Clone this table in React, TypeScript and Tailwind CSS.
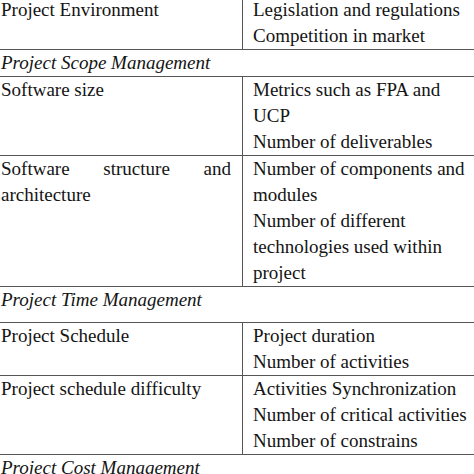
type Row =
  | { kind: "section"; title: string; extra?: boolean }
  | { kind: "pair"; left: string; right: string[]; justify?: boolean };

const rows: Row[] = [
  { kind: "pair", left: "Project Environment", right: ["Legislation and regulations", "Competition in market"] },
  { kind: "section", title: "Project Scope Management" },
  { kind: "pair", left: "Software size", right: ["Metrics such as FPA and", "UCP", "Number of deliverables"] },
  {
    kind: "pair",
    left: "Software structure and architecture",
    justify: true,
    right: ["Number of components and", "modules", "Number of different", "technologies used within", "project"],
  },
  { kind: "section", title: "Project Time Management", extra: true },
  { kind: "pair", left: "Project Schedule", right: ["Project duration", "Number of activities"] },
  {
    kind: "pair",
    left: "Project schedule difficulty",
    right: ["Activities Synchronization", "Number of critical activities", "Number of constrains"],
  },
  { kind: "section", title: "Project Cost Management" },
];

export default function App() {
  return (
    <div
      className="h-[474px] w-[474px] overflow-hidden bg-white text-[19px] leading-[26px] text-[#141414]"
      style={{ fontFamily: '"Liberation Serif", "Times New Roman", serif' }}
    >
      <div className="-mt-[3px]">
        {rows.map((row, i) =>
          row.kind === "section" ? (
            <div
              key={i}
              className={[
                "border-b border-[#555] pl-[1px] italic",
                row.extra ? "pb-[9px]" : "",
              ].join(" ")}
            >
              {row.title}
            </div>
          ) : (
            <div key={i} className="flex border-b border-[#555]">
              <div className="w-[243px] shrink-0 border-r border-[#555] pl-[1px] pr-[11px]">
                {row.justify ? <p className="text-justify">{row.left}</p> : row.left}
              </div>
              <div className="flex-1 pl-[10px]">
                {row.right.map((line) => (
                  <div key={line} className="whitespace-nowrap">
                    {line}
                  </div>
                ))}
              </div>
            </div>
          ),
        )}
      </div>
    </div>
  );
}
